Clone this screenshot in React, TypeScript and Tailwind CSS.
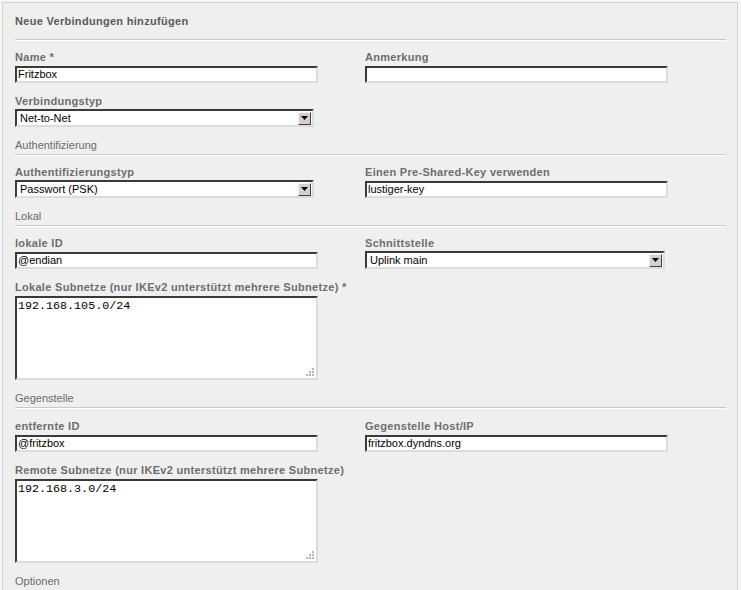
import React from 'react';

const font = { fontFamily: '"Liberation Sans", Arial, sans-serif' };

function Label({ children }: { children: React.ReactNode }) {
  return <div className="h-[14px] leading-[14px] text-[11px] font-bold tracking-[0.3px] text-[#6e6e6e]">{children}</div>;
}

function Section({ title, top = 'mt-[11px]' }: { title: string; top?: string }) {
  return (
    <div className={`${top} mr-[11px]`}>
      <div className="h-[14px] leading-[14px] text-[11px] text-[#6a6a6a]">{title}</div>
      <div className="mt-[2px] border-t border-b border-t-[#c9c9c9] border-b-white" />
    </div>
  );
}

function TextInput({ value }: { value: string }) {
  return (
    <div className="mt-[2px] w-[303px] h-[17px] bg-white border-2 border-t-[#3a3a3a] border-l-[#3a3a3a] border-b-[#dcdcdc] border-r-[#dcdcdc] pl-[1px] text-[11px] leading-[13px] text-black">
      {value}
    </div>
  );
}

function Select({ value, w }: { value: string; w: string }) {
  return (
    <div className={`mt-[1px] ${w} h-[18px] bg-white border-2 border-t-[#3a3a3a] border-l-[#3a3a3a] border-b-[#dcdcdc] border-r-[#dcdcdc] flex items-center justify-between text-[11px] text-black`}>
      <span className="pl-[3px] leading-[14px]">{value}</span>
      <div className="w-[13px] h-[13px] mr-[1px] bg-[#d4d0c8] border border-t-[#f4f4f4] border-l-[#f4f4f4] border-b-[#404040] border-r-[#404040] flex items-center justify-center">
        <svg width="7" height="4" viewBox="0 0 7 4">
          <path d="M0 0h7L3.5 4z" fill="#000" />
        </svg>
      </div>
    </div>
  );
}

function TextArea({ value }: { value: string }) {
  return (
    <div className="relative mt-[2px] w-[303px] h-[84px] bg-white border-2 border-t-[#3a3a3a] border-l-[#3a3a3a] border-b-[#dcdcdc] border-r-[#dcdcdc] pl-[1px] pt-[1px] text-[11.7px] leading-[14px] text-black" style={{ fontFamily: '"Liberation Mono", "Courier New", monospace' }}>
      {value}
      <svg className="absolute right-[1px] bottom-[1px]" width="9" height="9" viewBox="0 0 9 9">
        <g fill="#b5b5b5">
          <rect x="6" y="0" width="2" height="2" />
          <rect x="3" y="3" width="2" height="2" />
          <rect x="6" y="3" width="2" height="2" />
          <rect x="0" y="6" width="2" height="2" />
          <rect x="3" y="6" width="2" height="2" />
          <rect x="6" y="6" width="2" height="2" />
        </g>
      </svg>
    </div>
  );
}

export default function App() {
  return (
    <div className="w-[741px] h-[590px] bg-[#f6f6f6] pt-[2px] pl-[2px] overflow-hidden" style={font}>
      <div className="w-[736px] h-[600px] bg-[#efefef] border-l border-t border-r border-[#d2d2d2] pl-[12px]">
        <div className="mt-[11px] h-[14px] leading-[14px] text-[11px] font-bold tracking-[0.3px] text-[#5a5a5a]">Neue Verbindungen hinzufügen</div>
        <div className="mt-[11px] mr-[11px] border-t border-b border-t-[#c9c9c9] border-b-white" />

        <div className="mt-[9px] grid grid-cols-[350px_1fr]">
          <div>
            <Label>Name *</Label>
            <TextInput value="Fritzbox" />
          </div>
          <div>
            <Label>Anmerkung</Label>
            <TextInput value="" />
          </div>
        </div>

        <div className="mt-[11px]">
          <Label>Verbindungstyp</Label>
          <Select value="Net-to-Net" w="w-[299px]" />
        </div>

        <Section title="Authentifizierung" />
        <div className="mt-[9px] grid grid-cols-[350px_1fr]">
          <div>
            <Label>Authentifizierungstyp</Label>
            <Select value="Passwort (PSK)" w="w-[299px]" />
          </div>
          <div>
            <Label>Einen Pre-Shared-Key verwenden</Label>
            <TextInput value="lustiger-key" />
          </div>
        </div>

        <Section title="Lokal" />
        <div className="mt-[9px] grid grid-cols-[350px_1fr]">
          <div>
            <Label>lokale ID</Label>
            <TextInput value="@endian" />
          </div>
          <div>
            <Label>Schnittstelle</Label>
            <Select value="Uplink main" w="w-[300px]" />
          </div>
        </div>
        <div className="mt-[11px]">
          <Label>Lokale Subnetze (nur IKEv2 unterstützt mehrere Subnetze) *</Label>
          <TextArea value="192.168.105.0/24" />
        </div>

        <Section title="Gegenstelle" />
        <div className="mt-[10px] grid grid-cols-[350px_1fr]">
          <div>
            <Label>entfernte ID</Label>
            <TextInput value="@fritzbox" />
          </div>
          <div>
            <Label>Gegenstelle Host/IP</Label>
            <TextInput value="fritzbox.dyndns.org" />
          </div>
        </div>
        <div className="mt-[11px]">
          <Label>Remote Subnetze (nur IKEv2 unterstützt mehrere Subnetze)</Label>
          <TextArea value="192.168.3.0/24" />
        </div>

        <Section title="Optionen" />
      </div>
    </div>
  );
}
